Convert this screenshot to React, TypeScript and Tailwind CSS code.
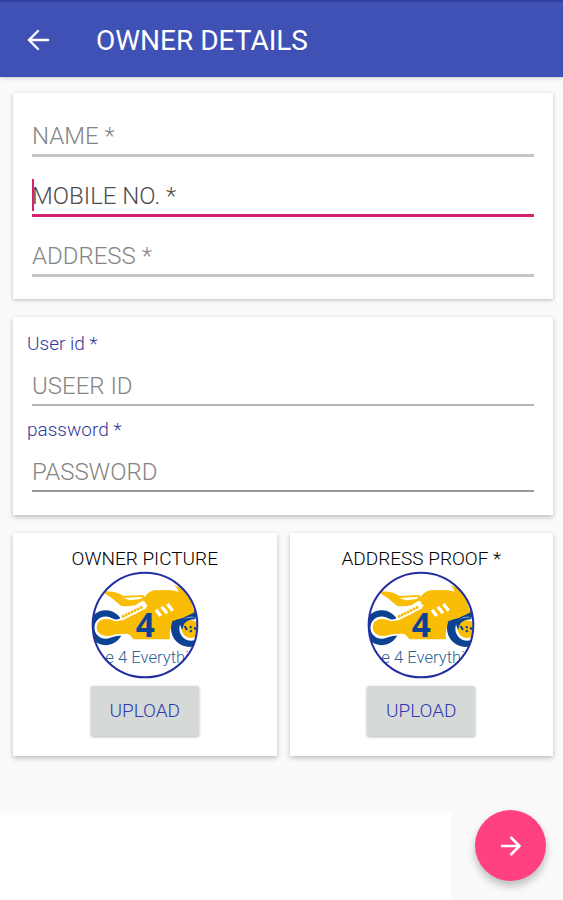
import React from 'react';
import { clsx } from 'clsx';

interface FieldProps {
    id: string;
    placeholder: string;
    type?: string;
    label?: string;
    active?: boolean;
    lineClass?: string;
}

const Field: React.FC<FieldProps> = ({ id, placeholder, type = 'text', label, active, lineClass = 'border-[#c4c4c4]' }) => (
    <div>
        {label && (
            <label htmlFor={id} className="block h-6 pl-[14px] text-[19px] leading-6 font-light text-[#303a9c]">
                {label}
            </label>
        )}
        <div className="relative mx-[19px]">
            <input
                id={id}
                type={type}
                placeholder={placeholder}
                aria-label={label ?? placeholder}
                className={clsx(
                    'block w-full bg-transparent text-2xl font-light outline-none',
                    label ? 'h-[50px] border-b-2 pt-4 pb-1' : 'h-[60px] border-b-[3px] pt-6 pb-1',
                    active
                        ? 'border-[#d3226f] caret-transparent placeholder:text-[#4d4d4d]'
                        : clsx('placeholder:text-[#858585]', lineClass),
                )}
            />
            {active && <span className="absolute bottom-[6px] left-0 h-8 w-[2px] bg-[#d3226f]" />}
        </div>
    </div>
);

const BikeLogo: React.FC<{ clipId: string }> = ({ clipId }) => (
    <svg viewBox="33 93 324 324" className="h-[108px] w-[108px]" aria-hidden="true">
        <defs>
            <clipPath id={clipId}>
                <circle cx="195" cy="255" r="156" />
            </clipPath>
        </defs>
        <g clipPath={`url(#${clipId})`}>
            <rect x="33" y="93" width="324" height="324" fill="#fff" />
            {/* rear wheel */}
            <circle cx="77" cy="263" r="43" fill="none" stroke="#0b4392" strokeWidth="19" />
            {/* frame, outlined in white where it crosses the rear tyre */}
            <path
                d="M130 240 L200 204 L192 176 Q200 156 222 151 L262 150 Q290 150 308 163 L326 178 Q342 200 340 217 L318 226 Q292 232 278 252 Q266 268 270 298 L160 298 Q150 282 140 281 L108 283 Q82 292 65 284 Q50 277 50 263 Q50 244 66 239 Q84 234 106 244 Z"
                fill="#f8bd04"
                stroke="#fff"
                strokeWidth="10"
                paintOrder="stroke"
            />
            {/* tail and seat */}
            <path d="M60 152 L96 155 Q116 157 130 168 L190 165 L206 190 L188 182 L166 196 Q146 200 124 198 L92 172 Z" fill="#f8bd04" />
            <path d="M130 174 L188 170 L182 177 L150 181 Z" fill="#fff" />
            <path d="M282 134 Q294 142 308 142 L340 176 L336 194 Q316 170 296 158 L292 146 Z" fill="#f8bd04" />
            <path d="M118 238 L128 222 L188 188 L204 196 L166 222 Z" fill="#fff" />
            <path d="M126 231 L188 200" stroke="#f8bd04" strokeWidth="8" strokeDasharray="8 2" />
            <path d="M228 209 L242 228 M245 200 L261 220 M262 192 L278 212" stroke="#fff" strokeWidth="10" />
            {/* front wheel */}
            <circle cx="329" cy="265" r="56" fill="#0b4392" />
            <path d="M284 214 L340 206 L344 217 L308 234 Q288 238 278 244 Z" fill="#f8bd04" />
            <circle cx="334" cy="266" r="36" fill="#fff" />
            <circle cx="332" cy="267" r="27" fill="#f8bd04" />
            <path d="M298 248 Q314 230 346 232 L346 238 Q322 238 312 252 L306 270 Z" fill="#0b4392" />
            <path d="M314 258 L321 270 M331 258 L333 265 M344 262 L346 269 M329 275 L336 272" fill="none" stroke="#0b4392" strokeWidth="6" />
            <text x="167" y="290" fontSize="100" fontWeight="700" fill="#0b4392" className="font-['Open_Sans',sans-serif]">
                4
            </text>
            <text x="76" y="368" fontSize="50" fontWeight="300" fill="#2f6595" className="font-[Roboto,sans-serif]">
                e 4 Everythi
            </text>
        </g>
        <circle cx="195" cy="255" r="157" fill="none" stroke="#232da2" strokeWidth="6" />
    </svg>
);

const UploadCard: React.FC<{ id: string; title: string }> = ({ id, title }) => (
    <section className="flex h-[223px] flex-1 flex-col items-center bg-white pt-[14px] shadow-[0_2px_5px_rgba(0,0,0,0.25)]">
        <h2 id={id} className="h-6 text-[19px] leading-6 font-light text-black">
            {title}
        </h2>
        <BikeLogo clipId={`${id}-clip`} />
        <button
            type="button"
            aria-describedby={id}
            className="mt-[7px] h-[50px] w-[108px] rounded-xs bg-[#d5d9d8] text-[19px] font-light text-[#3038b0] shadow-[0_1px_3px_rgba(0,0,0,0.3)]"
        >
            UPLOAD
        </button>
    </section>
);

export default function App() {
    return (
        <div className="flex min-h-screen flex-col bg-[#fafafa] font-[Roboto,sans-serif]">
            <header className="flex h-[77px] items-center border-t-2 border-[#303f9f] bg-[#3f51b5] pt-[2px] pl-[26px] text-white shadow-[0_1px_4px_rgba(0,0,0,0.2)]">
                <button type="button" aria-label="Back">
                    <svg viewBox="0 0 24 24" className="h-6 w-6" fill="none" stroke="currentColor" strokeWidth="2.4" strokeLinecap="round">
                        <path d="M22 11H3M12 2 3 11l9 9" />
                    </svg>
                </button>
                <h1 className="ml-[46px] text-[28px] font-normal">OWNER DETAILS</h1>
            </header>

            <main className="flex flex-col gap-[18px] pt-4 pr-[10px] pl-[13px]">
                <section className="bg-white pt-1 pb-[22px] shadow-[0_1px_4px_rgba(0,0,0,0.25)]">
                    <Field id="name" placeholder="NAME *" />
                    <Field id="mobile" type="tel" placeholder="MOBILE NO. *" active />
                    <Field id="address" placeholder="ADDRESS *" />
                </section>

                <section className="flex flex-col gap-3 bg-white pt-[15px] pb-[23px] shadow-[0_2px_5px_rgba(0,0,0,0.25)]">
                    <Field id="user-id" label="User id *" placeholder="USEER ID" lineClass="border-[#b4b4b4]" />
                    <Field id="password" type="password" label="password *" placeholder="PASSWORD" lineClass="border-[#999999]" />
                </section>

                <div className="flex gap-[13px]">
                    <UploadCard id="owner-picture" title="OWNER PICTURE" />
                    <UploadCard id="address-proof" title="ADDRESS PROOF *" />
                </div>
            </main>

            <footer className="mt-auto flex items-end">
                <div className="h-[87px] flex-1 bg-white" />
                <button
                    type="button"
                    aria-label="Next"
                    className="mr-[17px] mb-[19px] ml-6 flex h-[71px] w-[71px] items-center justify-center rounded-full bg-[#ff4081] text-white shadow-[0_5px_8px_rgba(0,0,0,0.25)]"
                >
                    <svg viewBox="0 0 24 24" className="h-6 w-6" fill="none" stroke="currentColor" strokeWidth="2.6">
                        <path d="M2 12h18M11.500 3l9 9-9 9" />
                    </svg>
                </button>
            </footer>
        </div>
    );
}
